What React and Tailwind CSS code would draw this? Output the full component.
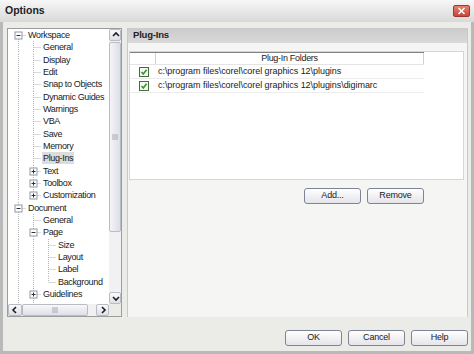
import React from "react";

const rows = [
  { label: "Workspace", level: 0, guides: [], pos: "first", exp: "-" },
  { label: "General", level: 1, guides: [true], pos: "mid" },
  { label: "Display", level: 1, guides: [true], pos: "mid" },
  { label: "Edit", level: 1, guides: [true], pos: "mid" },
  { label: "Snap to Objects", level: 1, guides: [true], pos: "mid" },
  { label: "Dynamic Guides", level: 1, guides: [true], pos: "mid" },
  { label: "Warnings", level: 1, guides: [true], pos: "mid" },
  { label: "VBA", level: 1, guides: [true], pos: "mid" },
  { label: "Save", level: 1, guides: [true], pos: "mid" },
  { label: "Memory", level: 1, guides: [true], pos: "mid" },
  { label: "Plug-Ins", level: 1, guides: [true], pos: "mid", sel: true },
  { label: "Text", level: 1, guides: [true], pos: "mid", exp: "+" },
  { label: "Toolbox", level: 1, guides: [true], pos: "mid", exp: "+" },
  { label: "Customization", level: 1, guides: [true], pos: "last", exp: "+" },
  { label: "Document", level: 0, guides: [], pos: "mid", exp: "-" },
  { label: "General", level: 1, guides: [true], pos: "mid" },
  { label: "Page", level: 1, guides: [true], pos: "mid", exp: "-" },
  { label: "Size", level: 2, guides: [true, true], pos: "mid" },
  { label: "Layout", level: 2, guides: [true, true], pos: "mid" },
  { label: "Label", level: 2, guides: [true, true], pos: "mid" },
  { label: "Background", level: 2, guides: [true, true], pos: "last" },
  { label: "Guidelines", level: 1, guides: [true], pos: "mid", exp: "+" },
  { label: "", level: 1, guides: [true], pos: "mid" },
];

const LINE = "#b4b4b4";

function Guide({ on }) {
  return (
    <svg width="15" height="12.33" className="shrink-0 block">
      {on && <line x1="7.5" y1="0" x2="7.5" y2="12.33" stroke={LINE} strokeWidth="1" strokeDasharray="1 1" />}
    </svg>
  );
}

function Elbow({ pos, exp }) {
  return (
    <svg width="15" height="12.33" className="shrink-0 block">
      {pos !== "first" && <line x1="7.5" y1="0" x2="7.5" y2="6" stroke={LINE} strokeDasharray="1 1" />}
      {pos !== "last" && <line x1="7.5" y1="6" x2="7.5" y2="12.33" stroke={LINE} strokeDasharray="1 1" />}
      <line x1="7.5" y1="6.5" x2="15" y2="6.5" stroke={LINE} strokeDasharray="1 1" />
      {exp && (
        <g>
          <rect x="4" y="3" width="7" height="7" fill="#ffffff" stroke="#8e9aa6" strokeWidth="1" />
          <line x1="5.5" y1="6.5" x2="9.5" y2="6.5" stroke="#303030" strokeWidth="1" />
          {exp === "+" && <line x1="7.5" y1="4.5" x2="7.5" y2="8.5" stroke="#303030" strokeWidth="1" />}
        </g>
      )}
    </svg>
  );
}

function TreeRow({ r }) {
  return (
    <div className="flex h-[12.33px] items-center shrink-0">
      {r.guides.map((g, i) => (
        <Guide key={i} on={g} />
      ))}
      <Elbow pos={r.pos} exp={r.exp} />
      <span
        className={
          "ml-[1px] px-[1px] leading-[12px] whitespace-nowrap tracking-[-0.35px] " +
          (r.sel ? "bg-[#dcdcdc]" : "")
        }
      >
        {r.label}
      </span>
    </div>
  );
}

function Chevron({ dir }) {
  const pts = {
    up: "3,7 6,4 9,7",
    down: "3,5 6,8 9,5",
    left: "7,3 4,6 7,9",
    right: "5,3 8,6 5,9",
  }[dir];
  return (
    <svg width="12" height="12" className="block">
      <polyline points={pts} fill="none" stroke="#1e1e1e" strokeWidth="1.6" />
    </svg>
  );
}

function ArrowBtn({ dir, className }) {
  return (
    <div
      className={
        "flex items-center justify-center rounded-[2px] border border-[#b8bcc6] bg-gradient-to-b from-[#fafafa] to-[#dfe0e6] " +
        className
      }
    >
      <Chevron dir={dir} />
    </div>
  );
}

function Button({ children, className = "" }) {
  return (
    <div
      className={
        "flex h-[16px] w-[57px] items-center justify-center rounded-[3px] border border-[#7d8594] bg-gradient-to-b from-[#ffffff] to-[#e4e4ea] text-[9px] tracking-[-0.2px] text-[#222] " +
        className
      }
    >
      {children}
    </div>
  );
}

function CheckBox() {
  return (
    <svg width="10" height="10" className="block">
      <rect x="0.5" y="0.5" width="9" height="9" fill="#f4f8f0" stroke="#4a6a3c" />
      <polyline points="2.5,5 4.3,7 7.6,2.8" fill="none" stroke="#2f9a2a" strokeWidth="1.6" />
    </svg>
  );
}

export default function App() {
  return (
    <div className="flex h-[354px] w-[474px] flex-col overflow-hidden bg-[#b9b9b9] font-['Liberation_Sans',Arial,sans-serif] text-[9px] text-[#1a1a1a]">
      {/* Title bar */}
      <div className="flex h-[22px] shrink-0 items-center bg-gradient-to-b from-[#f7f7f7] to-[#d9d9d9] pl-[5px] pr-[4px]">
        <span className="text-[10.5px] font-bold text-[#222]">Options</span>
        <div className="ml-auto flex h-[12px] w-[17px] items-center justify-center rounded-[2px] border border-[#9c3a32] bg-gradient-to-b from-[#e8806e] to-[#c8463a]">
          <svg width="9" height="8">
            <line x1="1.5" y1="1" x2="7.5" y2="7" stroke="#fff" strokeWidth="1.6" />
            <line x1="7.5" y1="1" x2="1.5" y2="7" stroke="#fff" strokeWidth="1.6" />
          </svg>
        </div>
      </div>

      {/* Body */}
      <div className="mx-[3px] flex flex-1 flex-col bg-[#ebebe8]">
        <div className="flex gap-[5px] pl-[4px] pr-[3px] pt-[6px]">
          {/* Tree panel */}
          <div className="flex h-[289px] w-[115px] shrink-0 flex-col border border-[#9c9c9c] bg-white">
            <div className="flex h-[275px]">
              <div className="flex-1 overflow-hidden pl-[3px]">
                {rows.map((r, i) => (
                  <TreeRow key={i} r={r} />
                ))}
              </div>
              <div className="flex w-[12px] flex-col bg-[#f1f1f4]">
                <ArrowBtn dir="up" className="h-[12px] w-[12px]" />
                <div className="mt-[1px] flex h-[190px] items-center justify-center rounded-[2px] border border-[#b8bcc6] bg-gradient-to-r from-[#f4f4f8] to-[#dedfe6]">
                  <svg width="6" height="6">
                    <line x1="0" y1="1" x2="6" y2="1" stroke="#a8a8b0" />
                    <line x1="0" y1="3" x2="6" y2="3" stroke="#a8a8b0" />
                    <line x1="0" y1="5" x2="6" y2="5" stroke="#a8a8b0" />
                  </svg>
                </div>
                <div className="flex-1" />
                <ArrowBtn dir="down" className="h-[12px] w-[12px]" />
              </div>
            </div>
            <div className="flex h-[12px] bg-[#f1f1f4]">
              <ArrowBtn dir="left" className="h-[12px] w-[14px]" />
              <div className="flex h-[12px] w-[66px] items-center justify-center rounded-[2px] border border-[#b8bcc6] bg-gradient-to-b from-[#f8f8fa] to-[#dedfe6]">
                <svg width="6" height="6">
                  <line x1="1" y1="0" x2="1" y2="6" stroke="#a8a8b0" />
                  <line x1="3" y1="0" x2="3" y2="6" stroke="#a8a8b0" />
                  <line x1="5" y1="0" x2="5" y2="6" stroke="#a8a8b0" />
                </svg>
              </div>
              <div className="w-[8px]" />
              <ArrowBtn dir="right" className="h-[12px] w-[13px]" />
              <div className="w-[12px] bg-[#ebebe8]" />
            </div>
          </div>

          {/* Right panel */}
          <div className="flex h-[289px] flex-1 flex-col border-x border-[#c8c8c8] bg-[#f5f5f3]">
            <div className="flex h-[15px] shrink-0 items-center bg-gradient-to-b from-[#cbcbcb] to-[#d9d9d9] pl-[5px]">
              <span className="text-[9.5px] font-bold tracking-[-0.2px] text-[#222]">Plug-Ins</span>
            </div>
            <div className="ml-[1px] mr-[3px] mt-[8px] h-[129px] border border-[#d6d6d6] bg-white">
              <div className="flex h-[13px] w-[294px] border-t border-[#808080] border-b border-b-[#e4e4e4]">
                <div className="w-[26px] border-r border-[#d0d0d0]" />
                <div className="flex flex-1 items-center justify-center border-r border-[#d0d0d0] tracking-[-0.3px]">
                  Plug-In Folders
                </div>
              </div>
              {[
                "c:\\program files\\corel\\corel graphics 12\\plugins",
                "c:\\program files\\corel\\corel graphics 12\\plugins\\digimarc",
              ].map((t, i) => (
                <div key={i} className="flex h-[14px] w-[294px] items-center border-b border-[#ececec]">
                  <div className="flex w-[26px] justify-center pl-[2px]">
                    <CheckBox />
                  </div>
                  <span className="pl-[2px] whitespace-nowrap tracking-[-0.05px]">{t}</span>
                </div>
              ))}
            </div>
            <div className="mr-[43px] mt-[8px] flex justify-end gap-[6px]">
              <Button>Add...</Button>
              <Button>Remove</Button>
            </div>
          </div>
        </div>

        {/* Bottom buttons */}
        <div className="mt-[13px] flex justify-end gap-[6px] pr-[3px]">
          <Button>OK</Button>
          <Button>Cancel</Button>
          <Button>Help</Button>
        </div>
      </div>
      <div className="h-[3px] shrink-0 bg-[#b9b9b9]" />
    </div>
  );
}
